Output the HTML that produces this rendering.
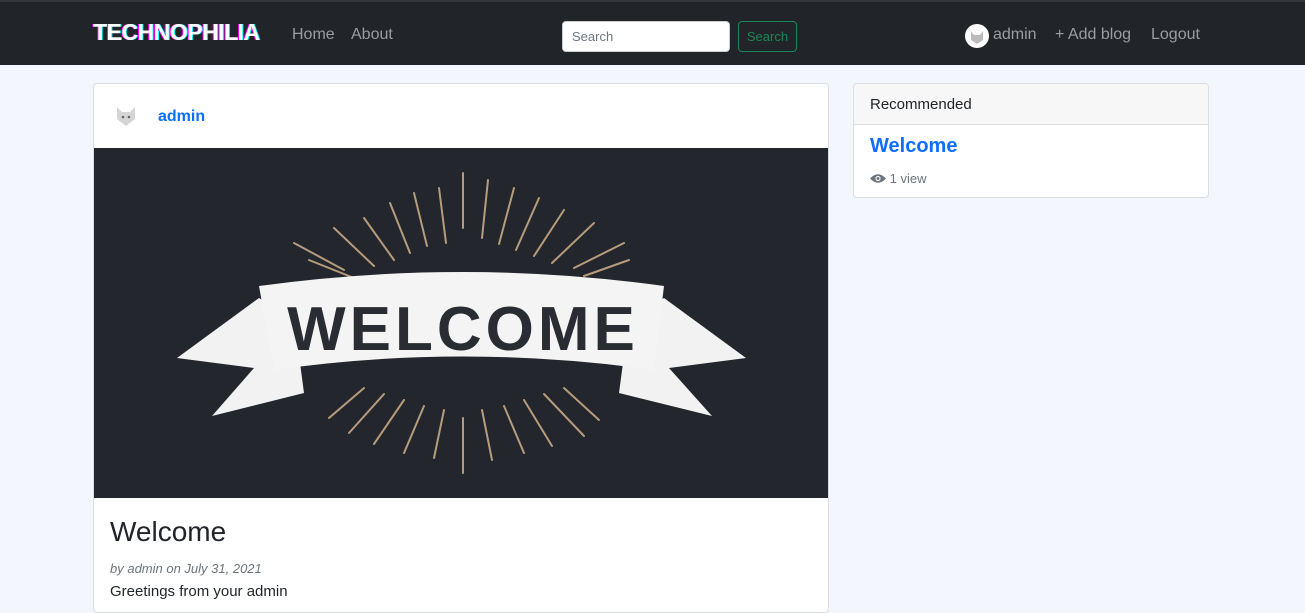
<!DOCTYPE html>
<html><head><meta charset="utf-8"><style>
*{box-sizing:border-box;margin:0;padding:0}
body{width:1305px;height:604px;overflow:hidden;background:#f3f6fd;font-family:"Liberation Sans",sans-serif;position:relative}
.nav{position:absolute;left:0;top:0;width:1305px;height:65px;background:#212529;border-top:2px solid #34373b}
.logo{position:absolute;left:93px;top:17px;font-size:23px;font-weight:bold;color:#fff;letter-spacing:-0.5px;text-shadow:-1px 0 #f0f,1px 0 #0ff}
.nl{position:absolute;top:24px;font-size:16px;color:#9a9da1}
.search{position:absolute;left:562px;top:19px;width:168px;height:31px;background:#fff;border-radius:4px;border:1px solid #ccc;font-size:13px;color:#6c757d;padding:7px 9px}
.sbtn{position:absolute;left:738px;top:19px;width:59px;height:31px;border:1px solid #198754;border-radius:4px;color:#198754;font-size:13px;text-align:center;line-height:29px}
.av{position:absolute;border-radius:50%;background:#f2f2f2;overflow:hidden}
.card{position:absolute;background:#fff;border:1px solid #dcdde0;border-radius:4px}
</style></head><body>
<div class="nav">
<div class="logo">TECHNOPHILIA</div>
<div class="nl" style="left:292px">Home</div>
<div class="nl" style="left:351px">About</div>
<div class="search">Search</div>
<div class="sbtn">Search</div>
<div class="av" style="left:965px;top:22px;width:24px;height:24px;background:#fff"><svg width="24" height="24"><path d="M6 7l3 4h6l3-4v9l-6 4-6-4z" fill="#bbb"/></svg></div>
<div class="nl" style="left:993px">admin</div>
<div class="nl" style="left:1055px">+ Add blog</div>
<div class="nl" style="left:1151px">Logout</div>
</div>

<div class="card" style="left:93px;top:83px;width:736px;height:530px">
<svg style="position:absolute;left:20px;top:20px" width="24" height="24"><path d="M3 3l5 5h8l5-5v12l-9 7-9-7z" fill="#d5d5d5"/><circle cx="9" cy="13" r="1.3" fill="#666"/><circle cx="15" cy="13" r="1.3" fill="#666"/></svg>
<div style="position:absolute;left:64px;top:24px;font-size:16px;font-weight:bold;color:#0d6efd">admin</div>
<svg style="position:absolute;left:0;top:64px" width="734" height="350" viewBox="0 0 734 350">
<rect width="734" height="350" fill="#24262d"/>
<g stroke="#b59c7c" stroke-width="2" stroke-linecap="round">
<line x1="369" y1="25" x2="369" y2="80"/><line x1="345" y1="40" x2="352" y2="95"/><line x1="394" y1="32" x2="388" y2="90"/>
<line x1="320" y1="45" x2="333" y2="98"/><line x1="420" y1="40" x2="405" y2="96"/><line x1="296" y1="55" x2="316" y2="105"/>
<line x1="445" y1="50" x2="422" y2="102"/><line x1="270" y1="70" x2="300" y2="112"/><line x1="470" y1="62" x2="440" y2="108"/>
<line x1="240" y1="80" x2="280" y2="118"/><line x1="500" y1="75" x2="458" y2="115"/><line x1="200" y1="95" x2="250" y2="122"/>
<line x1="530" y1="95" x2="480" y2="120"/><line x1="215" y1="112" x2="260" y2="130"/><line x1="535" y1="112" x2="490" y2="128"/>
<line x1="369" y1="270" x2="369" y2="325"/><line x1="350" y1="262" x2="340" y2="310"/><line x1="388" y1="262" x2="398" y2="312"/>
<line x1="330" y1="258" x2="310" y2="305"/><line x1="410" y1="258" x2="430" y2="305"/><line x1="310" y1="252" x2="280" y2="296"/>
<line x1="430" y1="252" x2="458" y2="298"/><line x1="290" y1="246" x2="255" y2="285"/><line x1="450" y1="246" x2="490" y2="288"/>
<line x1="270" y1="240" x2="235" y2="270"/><line x1="470" y1="240" x2="505" y2="272"/>
</g>
<path d="M165 150 L83 210 L160 220 L118 268 L210 245 L200 170 Z" fill="#f2f2f2"/>
<path d="M570 150 L652 210 L575 220 L618 268 L525 245 L535 170 Z" fill="#f2f2f2"/>
<path d="M165 138 Q369 110 570 138 L560 222 Q369 195 180 222 Z" fill="#f4f4f4"/>
<text x="369" y="202" text-anchor="middle" font-family="Liberation Sans Narrow,Liberation Sans,sans-serif" font-weight="bold" font-size="62" fill="#2a2c33" letter-spacing="4">WELCOME</text>
</svg>
<div style="position:absolute;left:16px;top:432px;font-size:28px;color:#212529">Welcome</div>
<div style="position:absolute;left:16px;top:477px;font-size:13px;font-style:italic;color:#6c757d">by admin on July 31, 2021</div>
<div style="position:absolute;left:16px;top:499px;font-size:15px;color:#212529">Greetings from your admin</div>
</div>

<div class="card" style="left:853px;top:83px;width:356px;height:115px;overflow:hidden">
<div style="height:41px;background:#f7f7f7;border-bottom:1px solid #dcdde0;padding:12px 16px;font-size:15px;color:#212529">Recommended</div>
<div style="position:absolute;left:16px;top:51px;font-size:20px;font-weight:bold;color:#0d6efd">Welcome</div>
<div style="position:absolute;left:16px;top:87px;font-size:13px;color:#6c757d"><svg width="16" height="11" style="vertical-align:-1px"><path d="M0 5.5Q8 -3 16 5.5Q8 14 0 5.5Z" fill="#6c757d"/><circle cx="8" cy="5.5" r="2.6" fill="#fff"/><circle cx="8" cy="5.5" r="1.5" fill="#6c757d"/></svg> 1 view</div>
</div>
</body></html>
